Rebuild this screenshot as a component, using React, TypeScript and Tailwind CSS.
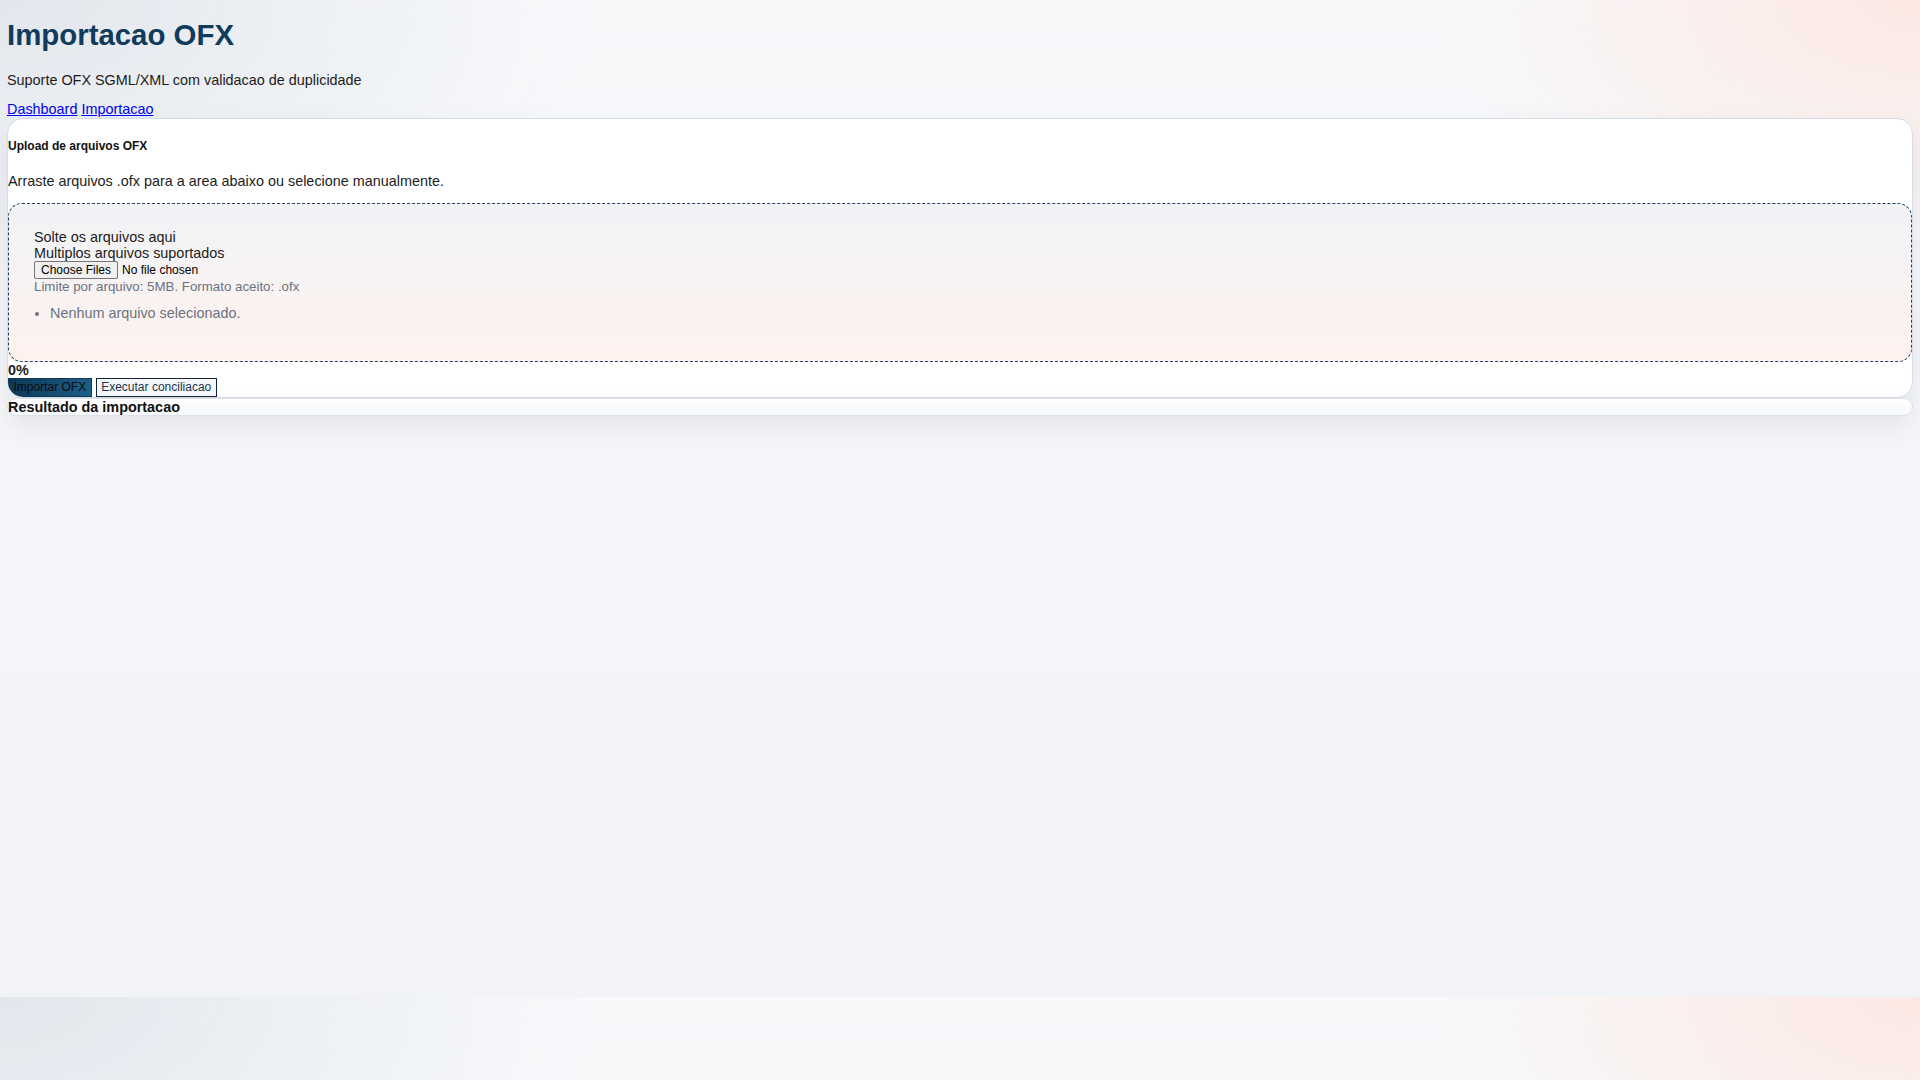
export default function App() {
  return (
    <div className="min-h-screen w-full bg-[image:radial-gradient(ellipse_at_top_left,#e2e7ed_0%,transparent_22%),radial-gradient(ellipse_at_top_right,#fce8e3_0%,transparent_18%),linear-gradient(180deg,#f8f9fb_0%,#f2f3f6_100%)] bg-[length:100%_997px] px-[7px] pt-[17px] font-[family-name:'Liberation_Sans',Arial,sans-serif] text-[14.4px] leading-[normal] text-[#1c1c1c]">
      <h1 className="text-[29.4px] leading-[36px] font-bold text-[#0f3b5c]">Importacao OFX</h1>
      <p className="mt-[19px]">Suporte OFX SGML/XML com validacao de duplicidade</p>
      <nav className="mt-[14px] leading-[15.5px]">
        <a href="#" className="text-[#0000ee] underline">
          Dashboard
        </a>{' '}
        <a href="#" className="text-[#0000ee] underline">
          Importacao
        </a>
      </nav>

      <section className="overflow-hidden rounded-2xl border border-[#d7dde6] bg-white shadow-[0_12px_30px_rgba(15,23,42,0.08)]">
        <h2 className="mt-[20px] text-[12px] font-bold text-[#111]">Upload de arquivos OFX</h2>
        <p className="mt-[20px]">Arraste arquivos .ofx para a area abaixo ou selecione manualmente.</p>

        <div className="mt-[14px] rounded-[14px] border border-dashed border-[#23425e] bg-linear-to-b from-[#f1f3f6] to-[#fef2ef] pt-[25px] pr-6 pb-6 pl-[25px]">
          <div>Solte os arquivos aqui</div>
          <div>Multiplos arquivos suportados</div>
          <input
            type="file"
            multiple
            accept=".ofx"
            className="block text-[12px] text-black file:mr-[4px] file:rounded-[2px] file:border file:border-solid file:border-[#767676] file:bg-[#efefef] file:px-[6px] file:py-px file:text-black"
          />
          <p className="text-[13.3px] text-[#6b7280]">Limite por arquivo: 5MB. Formato aceito: .ofx</p>
          <ul className="mt-[11.5px] mb-[16px] list-disc pl-4 text-[#6b7280]">
            <li>Nenhum arquivo selecionado.</li>
          </ul>
        </div>

        <div className="font-bold">0%</div>
        <div className="flex gap-1">
          <button className="border border-[#0f3a5a] bg-linear-to-r from-[#0d3856] to-[#1d5f88] px-[4.5px] py-px text-[12px] leading-[15px] text-[#0b0b0b]">
            Importar OFX
          </button>
          <button className="border border-[#10273d] bg-[#f4f6f9] px-[4.5px] py-px text-[12px] leading-[15px] text-[#1b3550]">
            Executar conciliacao
          </button>
        </div>
      </section>

      <section className="rounded-2xl border border-[#dde1e8] bg-linear-to-b from-white to-[#f7f8fb] shadow-[0_12px_30px_rgba(15,23,42,0.08)]">
        <h3 className="font-bold text-[#111]">Resultado da importacao</h3>
      </section>
    </div>
  );
}
